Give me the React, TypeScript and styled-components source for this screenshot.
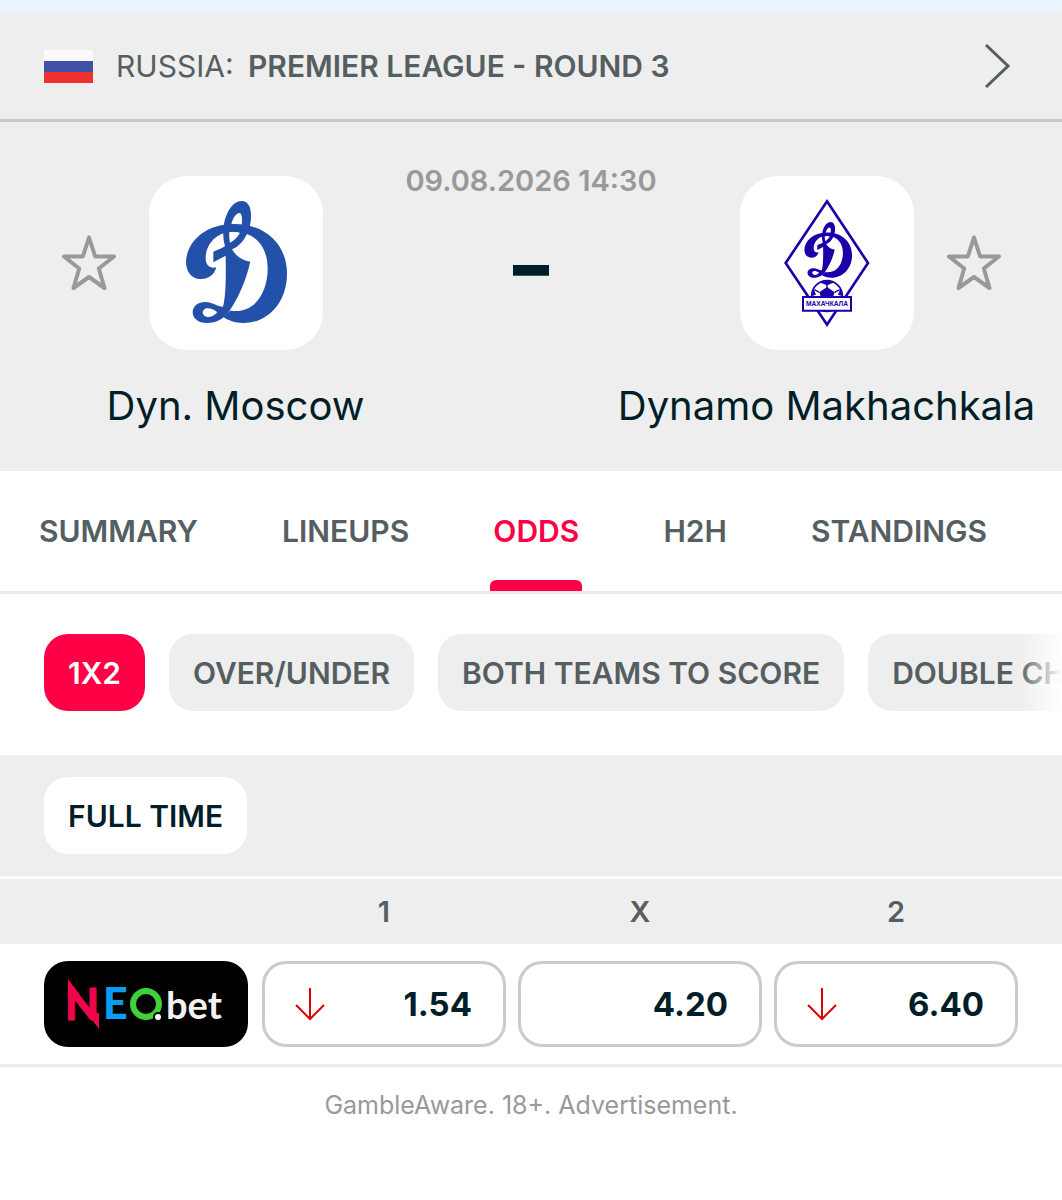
import React from "react";
import styled, { createGlobalStyle } from "styled-components";

const ink = "#001e28";
const slate = "#555e61";
const muted = "#999999";
const surface = "#eeeeee";
const accent = "#ff0046";
const sans = `Inter, "Noto Sans", "Liberation Sans", sans-serif`;

const GlobalStyle = createGlobalStyle`
  *, *::before, *::after { box-sizing: border-box; }
  body { margin: 0; background: #ffffff; color: ${ink}; font-family: ${sans}; }
  button { border: 0; margin: 0; padding: 0; background: none; color: inherit; font: inherit; cursor: pointer; }
  a { color: inherit; text-decoration: none; }
  svg { display: block; flex: none; }
`;

const Page = styled.div`
  overflow-x: hidden;
`;

const TopStrip = styled.div`
  height: 13px;
  background: #ebf5ff;
`;

const LeagueLink = styled.a`
  display: flex;
  align-items: center;
  gap: 23px;
  height: 109px;
  padding: 0 52px 0 44px;
  background: ${surface};
  border-bottom: 3px solid #c8c8c8;
  color: ${slate};
  font-size: 30px;
  line-height: 36px;
`;

const LeagueName = styled.span`
  flex: 1;
  white-space: nowrap;

  strong { font-weight: 600; margin-left: 6px; }
`;

const MatchHeader = styled.section`
  display: grid;
  grid-template-columns: 1fr 120px 1fr;
  padding: 54px 0 40px;
  background: ${surface};
`;

const Team = styled.div`
  display: flex;
  flex-direction: column;
  align-items: center;
  gap: 31px;
`;

const CrestRow = styled.div`
  display: grid;
  grid-template-columns: 54px 174px 54px;
  gap: 33px;
  align-items: center;
`;

const Crest = styled.div`
  grid-column: 2;
  grid-row: 1;
  height: 174px;
  border-radius: 38px;
  background: #ffffff;
`;

const StarButton = styled.button<{ $side: "left" | "right" }>`
  grid-column: ${(p) => (p.$side === "left" ? 1 : 3)};
  grid-row: 1;
`;

const TeamName = styled.h2`
  margin: 0;
  font-size: 40px;
  font-weight: 400;
  line-height: 50px;
  white-space: nowrap;
`;

const Score = styled.div`
  display: flex;
  flex-direction: column;
  align-items: center;
`;

const Kickoff = styled.time`
  margin-top: -13px;
  color: ${muted};
  font-size: 29px;
  font-weight: 600;
  line-height: 36px;
  white-space: nowrap;
`;

const Result = styled.span`
  margin-top: 26px;
  font-size: 72px;
  font-weight: 900;
  line-height: 80px;
`;

const Tabs = styled.nav`
  display: flex;
  justify-content: space-between;
  height: 123px;
  padding: 0 75px 0 39px;
  border-bottom: 3px solid #ebebeb;
`;

const Tab = styled.a<{ $active?: boolean }>`
  position: relative;
  display: flex;
  align-items: center;
  color: ${(p) => (p.$active ? accent : slate)};
  font-size: 30px;
  font-weight: 600;

  &::after {
    content: "";
    position: absolute;
    inset: auto -3px 0;
    height: 11px;
    border-radius: 6px 6px 0 0;
    background: ${(p) => (p.$active ? accent : "transparent")};
  }
`;

const Markets = styled.div`
  position: relative;
  display: flex;
  gap: 24px;
  padding: 40px 0 44px 44px;
  overflow: hidden;

  &::after {
    content: "";
    position: absolute;
    inset: 0 0 0 auto;
    width: 44px;
    background: linear-gradient(to right, rgba(255, 255, 255, 0), #ffffff);
  }
`;

const Chip = styled.button<{ $tone?: "active" | "light" }>`
  flex: none;
  height: 77px;
  padding: 0 24px;
  border-radius: 24px;
  background: ${(p) => (p.$tone === "active" ? accent : p.$tone === "light" ? "#ffffff" : surface)};
  color: ${(p) => (p.$tone === "active" ? "#ffffff" : p.$tone === "light" ? ink : slate)};
  font-size: 30px;
  font-weight: 600;
  white-space: nowrap;
`;

const Periods = styled.div`
  padding: 22px 44px;
  background: ${surface};
`;

const OddsTable = styled.table`
  display: block;
  margin-top: 3px;

  thead, tbody { display: block; }
`;

const OddsRow = styled.tr`
  display: grid;
  grid-template-columns: 206px repeat(3, 1fr);
  gap: 12px;
  padding: 17px 44px;
  border-bottom: 3px solid #ebebeb;
`;

const HeadRow = styled(OddsRow)`
  padding: 0 44px;
  border-bottom: 0;
  background: ${surface};
`;

const HeadCell = styled.th`
  padding: 0;
  color: ${slate};
  font-size: 29px;
  font-weight: 600;
  line-height: 65px;
`;

const Cell = styled.td`
  padding: 0;
`;

const Bookmaker = styled.a`
  display: block;
  width: 204px;
  height: 86px;
  border-radius: 24px;
  background: #000000;
`;

const OddButton = styled.button`
  display: flex;
  align-items: center;
  justify-content: flex-end;
  width: 100%;
  height: 86px;
  padding: 0 31px 0 29px;
  border: 3px solid #c8cccc;
  border-radius: 24px;
  font-size: 33px;
  font-weight: 700;

  svg { margin-right: auto; }
`;

const Notice = styled.p`
  margin: 0;
  padding: 22px 44px;
  color: ${muted};
  font-size: 25px;
  line-height: 32px;
  text-align: center;
`;

function Flag() {
  return (
    <svg width="49" height="33" viewBox="0 0 49 33" aria-hidden="true">
      <path fill="#fafafa" d="M0 0h49v11H0z" />
      <path fill="#3f51a5" d="M0 11h49v11H0z" />
      <path fill="#ef3030" d="M0 22h49v11H0z" />
    </svg>
  );
}

function Chevron() {
  return (
    <svg width="26" height="46" viewBox="0 0 26 46" fill="none" stroke={slate} strokeWidth="3" aria-hidden="true">
      <path d="M2 2l22 21L2 44" />
    </svg>
  );
}

function Star() {
  return (
    <svg width="54" height="56" viewBox="0 0 54 56" fill="none" stroke={muted} strokeWidth="4" strokeLinejoin="round" aria-hidden="true">
      <path d="M27 2.5L33.2 21.5H52L36.8 33.5L42.5 53L27 42L11.5 53L17.2 33.5L2 21.5H20.8Z" />
    </svg>
  );
}

/* The club's script D, drawn on a 522-unit tile. */
function ScriptD() {
  return (
    <g fillRule="evenodd">
      <path d="M229 307C222 332 204 343 181 342C153 341 138 318 138 290C140 235 190 177 283 177C378 177 441 240 441 326C441 412 384 474 310 474C284 474 265 466 250 457L270 437C348 449 383 376 383 312C383 254 356 203 283 200C226 199 197 241 197 280C197 303 211 311 229 307Z" />
      <path d="M250 190C256 142 278 108 305 108C331 108 338 142 330 181C322 214 303 243 276 253C290 276 307 286 331 290C318 345 298 394 268 438C248 466 224 474 201 474C174 474 158 460 158 441C158 423 175 411 195 411C218 411 231 425 249 425C258 394 258 330 257 272L220 292V260C236 253 248 249 255 243C250 228 249 207 250 190ZM274 180C284 182 294 183 304 186C309 160 305 144 298 144C288 145 276 162 274 180ZM268 201C267 212 268 222 270 233C284 226 294 214 300 203C290 200 279 199 268 201ZM232 442C219 431 208 429 199 430C192 432 188 437 188 443C189 451 198 456 207 456C217 455 225 450 232 442Z" />
    </g>
  );
}

function MoscowCrest() {
  return (
    <svg width="174" height="174" viewBox="27 33 522 522" fill="#2350a9" role="img" aria-label="Dyn. Moscow">
      <ScriptD />
    </svg>
  );
}

function MakhachkalaCrest() {
  const blue = "#1a00a8";
  return (
    <svg width="174" height="174" viewBox="30 33 522 522" fill={blue} role="img" aria-label="Dynamo Makhachkala">
      <path d="M291 109L414 294L291 479L167 294Z" fill="none" stroke={blue} strokeWidth="8" />
      <g transform="translate(158 122) scale(.472 .456)">
        <ScriptD />
      </g>
      <circle cx="291" cy="393" r="46" fill="#ffffff" stroke={blue} strokeWidth="5" />
      <path d="M291 366L314 382L308 400H274L268 382ZM268 352Q291 343 314 352L291 361ZM246 393L250 370L258 389ZM336 393L332 370L324 389Z" />
      <path d="M291 355V372M268 382L253 374M314 382L329 374" stroke={blue} strokeWidth="4" />
      <path d="M219 396H363V437H219Z" fill="#ffffff" stroke={blue} strokeWidth="6" />
      <text x="291" y="424" textAnchor="middle" fontFamily={`"Liberation Sans Narrow", "Liberation Sans", sans-serif`} fontWeight="700" fontSize="20">
        МАХАЧКАЛА
      </text>
    </svg>
  );
}

function NeoBetLogo() {
  return (
    <svg width="204" height="86" viewBox="0 0 204 86" role="img" aria-label="NEO.bet">
      <g fontFamily="Lato, sans-serif" fontWeight="700" fontSize="44">
        <text x="21" y="59" fontWeight="900" fill="#f0054b" stroke="#f0054b" strokeWidth="1">N</text>
        <text x="59" y="58" fontWeight="900" fontSize="43" fill="#0a9df0">E</text>
        <text x="122" y="58" fontSize="38" fill="#f2f2f2">bet</text>
      </g>
      <path d="M24 18L36 34H24ZM55 68L43 52H55Z" fill="#f0054b" />
      <circle cx="102" cy="43" r="13" fill="none" stroke="#3fd03a" strokeWidth="6" />
      <circle cx="114" cy="56" r="5" fill="#000000" />
      <circle cx="114" cy="56" r="3" fill="#ffffff" />
    </svg>
  );
}

function DownArrow() {
  return (
    <svg width="32" height="34" viewBox="0 0 32 34" fill="none" stroke="#dc0000" strokeWidth="2" aria-hidden="true">
      <path d="M16 1V32M2 18L16 32L30 18" />
    </svg>
  );
}

const tabs = ["Summary", "Lineups", "Odds", "H2H", "Standings"];
const markets = ["1X2", "OVER/UNDER", "BOTH TEAMS TO SCORE", "DOUBLE CHANCE"];
const odds = [
  { value: "1.54", falling: true },
  { value: "4.20", falling: false },
  { value: "6.40", falling: true },
];

export default function App() {
  return (
    <Page>
      <GlobalStyle />
      <TopStrip />
      <LeagueLink href="#league">
        <Flag />
        <LeagueName>
          RUSSIA: <strong>PREMIER LEAGUE - ROUND 3</strong>
        </LeagueName>
        <Chevron />
      </LeagueLink>

      <MatchHeader>
        <Team>
          <CrestRow>
            <StarButton $side="left" aria-label="Follow Dyn. Moscow"><Star /></StarButton>
            <Crest><MoscowCrest /></Crest>
          </CrestRow>
          <TeamName>Dyn. Moscow</TeamName>
        </Team>
        <Score>
          <Kickoff dateTime="2026-08-09T14:30">09.08.2026 14:30</Kickoff>
          <Result>–</Result>
        </Score>
        <Team>
          <CrestRow>
            <Crest><MakhachkalaCrest /></Crest>
            <StarButton $side="right" aria-label="Follow Dynamo Makhachkala"><Star /></StarButton>
          </CrestRow>
          <TeamName>Dynamo Makhachkala</TeamName>
        </Team>
      </MatchHeader>

      <Tabs>
        {tabs.map((tab) => (
          <Tab key={tab} href={`#${tab.toLowerCase()}`} $active={tab === "Odds"}>
            {tab.toUpperCase()}
          </Tab>
        ))}
      </Tabs>

      <Markets>
        {markets.map((market, i) => (
          <Chip key={market} $tone={i === 0 ? "active" : undefined}>{market}</Chip>
        ))}
      </Markets>

      <Periods>
        <Chip $tone="light">FULL TIME</Chip>
      </Periods>

      <OddsTable>
        <thead>
          <HeadRow>
            <Cell />
            <HeadCell scope="col">1</HeadCell>
            <HeadCell scope="col">X</HeadCell>
            <HeadCell scope="col">2</HeadCell>
          </HeadRow>
        </thead>
        <tbody>
          <OddsRow>
            <Cell>
              <Bookmaker href="#neobet"><NeoBetLogo /></Bookmaker>
            </Cell>
            {odds.map((odd) => (
              <Cell key={odd.value}>
                <OddButton>
                  {odd.falling && <DownArrow />}
                  {odd.value}
                </OddButton>
              </Cell>
            ))}
          </OddsRow>
        </tbody>
      </OddsTable>

      <Notice>GambleAware. 18+. Advertisement.</Notice>
    </Page>
  );
}
